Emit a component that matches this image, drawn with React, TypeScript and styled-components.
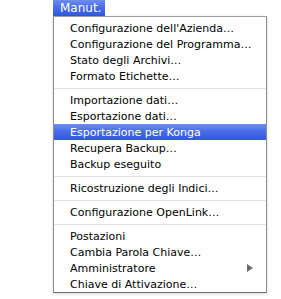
import React from 'react';
import styled, { createGlobalStyle } from 'styled-components';

type Entry = { label: string; active?: boolean; submenu?: boolean } | 'sep';

const entries: Entry[] = [
	{ label: "Configurazione dell'Azienda…" },
	{ label: 'Configurazione del Programma…' },
	{ label: 'Stato degli Archivi…' },
	{ label: 'Formato Etichette…' },
	'sep',
	{ label: 'Importazione dati…' },
	{ label: 'Esportazione dati…' },
	{ label: 'Esportazione per Konga', active: true },
	{ label: 'Recupera Backup…' },
	{ label: 'Backup eseguito' },
	'sep',
	{ label: 'Ricostruzione degli Indici…' },
	'sep',
	{ label: 'Configurazione OpenLink…' },
	'sep',
	{ label: 'Postazioni' },
	{ label: 'Cambia Parola Chiave…' },
	{ label: 'Amministratore', submenu: true },
	{ label: 'Chiave di Attivazione…' },
];

function App() {
	return (
		<>
			<GlobalStyle />
			<Page>
				<MenuTitle>Manut.</MenuTitle>
				<MenuPanel>
					{entries.map((entry, i) =>
						entry === 'sep' ? (
							<Separator key={i} />
						) : (
							<MenuItem key={i} $active={entry.active}>
								<span>{entry.label}</span>
								{entry.submenu && <Arrow />}
							</MenuItem>
						)
					)}
				</MenuPanel>
			</Page>
		</>
	);
}

const GlobalStyle = createGlobalStyle`
	body {
		margin: 0;
		background: #ffffff;
		font-family: 'DejaVu Sans', 'Liberation Sans', sans-serif;
	}
`;

const Page = styled.div`
	display: flex;
	flex-direction: column;
	align-items: flex-start;
	padding-left: 53px;
	width: 281px;
	height: 299px;
	box-sizing: border-box;
`;

const blue = `linear-gradient(to bottom, #6d8cf2 0%, #4a6ee8 45%, #2f56df 100%)`;

const MenuTitle = styled.div`
	height: 16px;
	line-height: 16px;
	padding: 0 8px 0 7px;
	width: 52px;
	box-sizing: border-box;
	background: ${blue};
	color: #ffffff;
	font-size: 12px;
`;

const MenuPanel = styled.div`
	width: 214px;
	box-sizing: border-box;
	border: 1px solid #8c8c8c;
	border-top-color: #a0a0a0;
	border-bottom-color: #6e6e6e;
	padding: 3px 0 0;
	box-shadow: 0 1px 3px rgba(0, 0, 0, 0.15);
	display: flex;
	flex-direction: column;
`;

const MenuItem = styled.div<{ $active?: boolean }>`
	height: 16px;
	display: flex;
	align-items: center;
	justify-content: space-between;
	padding: 0 13px 0 16px;
	font-size: 11px;
	color: ${(p) => (p.$active ? '#ffffff' : '#000000')};
	background: ${(p) => (p.$active ? blue : 'transparent')};
	white-space: nowrap;
`;

const Separator = styled.div`
	height: 8px;
	display: flex;
	align-items: center;

	&::after {
		content: '';
		flex: 1;
		height: 1px;
		background: #e2e2e2;
	}
`;

const Arrow = styled.span`
	width: 0;
	height: 0;
	border-top: 4px solid transparent;
	border-bottom: 4px solid transparent;
	border-left: 6px solid #6a6a6a;
`;

export default App;
